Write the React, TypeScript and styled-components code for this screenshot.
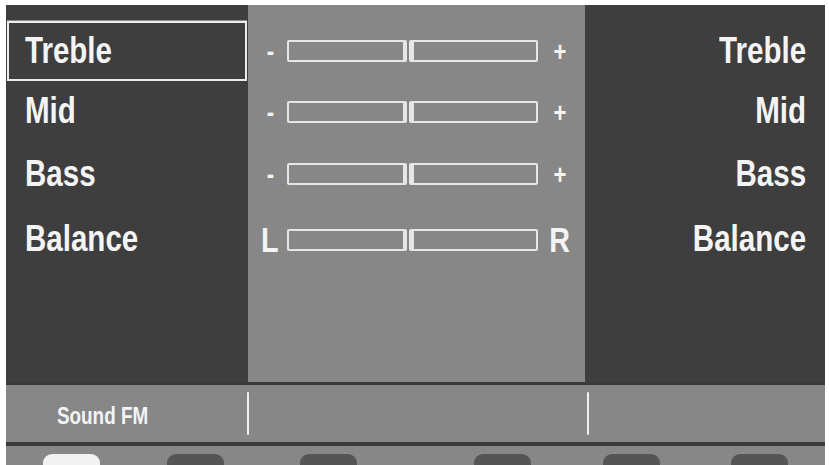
import styled, { createGlobalStyle } from "styled-components";

const GlobalStyle = createGlobalStyle`
  html, body {
    margin: 0;
    padding: 0;
    background: #ffffff;
  }
  * {
    box-sizing: border-box;
  }
`;

const Screen = styled.div`
  width: 829px;
  height: 465px;
  overflow: hidden;
  padding: 5px 4px 0 6px;
  font-family: "Liberation Sans", Arial, sans-serif;
  color: #f4f4f4;
`;

// the display uses a condensed bold face, so squeeze Liberation Sans Bold
const Narrow = styled.span<{ $origin?: string }>`
  display: inline-block;
  transform: scaleX(0.82);
  transform-origin: ${(p) => p.$origin || "left"} center;
  white-space: nowrap;
`;

const Main = styled.div`
  display: grid;
  grid-template-columns: 242px 337px 240px;
  height: 377px;
`;

const SidePanel = styled.div<{ $right?: boolean }>`
  background: #3e3e3e;
  display: flex;
  flex-direction: column;
  padding-top: ${(p) => (p.$right ? "16px" : "15px")};
`;

const TopStripGap = styled.div`
  height: 1px;
  margin: 0 1px;
  background: #8a8a8a;
`;

const CenterPanel = styled.div`
  background: #878787;
  display: flex;
  flex-direction: column;
  padding-top: 16px;
`;

const LabelRow = styled.div<{ $h: number; $right?: boolean; $selected?: boolean }>`
  height: ${(p) => p.$h}px;
  display: flex;
  align-items: center;
  justify-content: ${(p) => (p.$right ? "flex-end" : "flex-start")};
  padding: ${(p) =>
    p.$right ? "0 19px 1px 0" : p.$selected ? "0 0 1px 16px" : "0 0 1px 19px"};
  margin: ${(p) => (p.$selected ? "0 1px" : "0")};
  border: ${(p) => (p.$selected ? "2px solid #ececec" : "none")};
  font-size: 36px;
  font-weight: 700;
  line-height: 1;
`;

const SliderRow = styled.div<{ $h: number }>`
  height: ${(p) => p.$h}px;
  display: grid;
  grid-template-columns: 24px 251px 25px;
  column-gap: 5px;
  align-items: center;
  padding-left: 10px;
  & > :last-child {
    margin-left: 8px;
  }
`;

const Sign = styled.span<{ $big?: boolean }>`
  display: flex;
  justify-content: center;
  font-size: ${(p) => (p.$big ? "35px" : "27px")};
  font-weight: 700;
  line-height: 1;
  margin-top: ${(p) => (p.$big ? "0" : "3px")};
`;

const Track = styled.div`
  display: flex;
  gap: 2px;
  height: 22px;
`;

const Half = styled.div<{ $side: "left" | "right" }>`
  flex: ${(p) => (p.$side === "left" ? "0 0 120px" : "1")};
  border: 2px solid #e6e6e6;
  border-right-width: ${(p) => (p.$side === "left" ? "4px" : "2px")};
  border-left-width: ${(p) => (p.$side === "right" ? "5px" : "2px")};
  border-radius: 2px;
  background: #878787;
`;

const StatusBar = styled.div`
  display: grid;
  grid-template-columns: 241px 2px 338px 2px 1fr;
  align-items: center;
  height: 64px;
  background: #878787;
  border-top: 3px solid #3a3a3a;
  border-bottom: 4px solid #3a3a3a;
`;

const StatusText = styled.div`
  padding: 5px 0 0 51px;
  font-size: 23px;
  font-weight: 700;
  line-height: 1;
`;

const Divider = styled.div`
  height: 43px;
  background: #f0f0f0;
  border-radius: 1px;
`;

const SoftKeys = styled.div`
  display: flex;
  height: 20px;
  padding-top: 8px;
  background: #878787;
`;

const SoftKey = styled.div<{ $active?: boolean; $offset: number }>`
  width: 57px;
  height: 24px;
  margin-left: ${(p) => p.$offset}px;
  border-radius: 9px 9px 0 0;
  background: ${(p) => (p.$active ? "#f2f2f2" : "#555555")};
`;

const rows = [
  { label: "Treble", h: 60, minus: "-", plus: "+" },
  { label: "Mid", h: 61, minus: "-", plus: "+" },
  { label: "Bass", h: 64, minus: "-", plus: "+" },
  { label: "Balance", h: 67, minus: "L", plus: "R" },
];

const keyOffsets = [37, 67, 76, 117, 72, 71];

const App = () => {
  return (
    <>
      <GlobalStyle />
      <Screen>
        <Main>
          <SidePanel>
            <TopStripGap />
            {rows.map((r, i) => (
              <LabelRow key={r.label} $h={r.h} $selected={i === 0}>
                <Narrow>{r.label}</Narrow>
              </LabelRow>
            ))}
          </SidePanel>
          <CenterPanel>
            {rows.map((r) => {
              const big = r.minus === "L";
              return (
                <SliderRow key={r.label} $h={r.h}>
                  <Sign $big={big}>
                    <Narrow $origin="center">{r.minus}</Narrow>
                  </Sign>
                  <Track>
                    <Half $side="left" />
                    <Half $side="right" />
                  </Track>
                  <Sign $big={big}>
                    <Narrow $origin="center">{r.plus}</Narrow>
                  </Sign>
                </SliderRow>
              );
            })}
          </CenterPanel>
          <SidePanel $right>
            {rows.map((r) => (
              <LabelRow key={r.label} $h={r.h} $right>
                <Narrow $origin="right">{r.label}</Narrow>
              </LabelRow>
            ))}
          </SidePanel>
        </Main>
        <StatusBar>
          <StatusText>
            <Narrow>Sound FM</Narrow>
          </StatusText>
          <Divider />
          <div />
          <Divider />
          <div />
        </StatusBar>
        <SoftKeys>
          {keyOffsets.map((o, i) => (
            <SoftKey key={i} $offset={o} $active={i === 0} />
          ))}
        </SoftKeys>
      </Screen>
    </>
  );
};

export default App;
